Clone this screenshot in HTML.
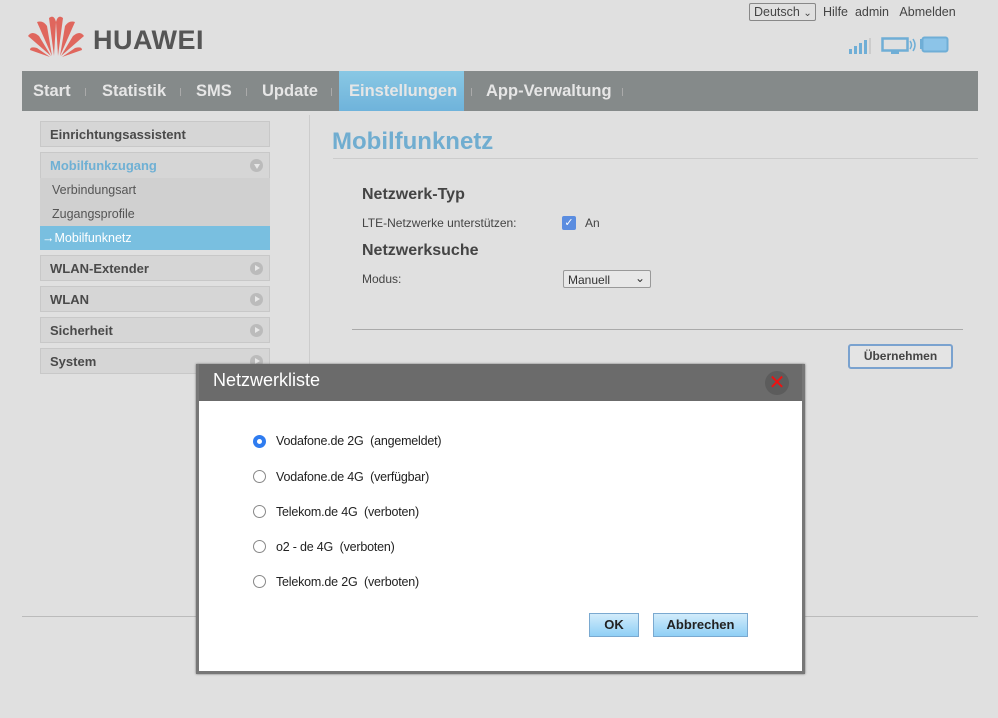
<!DOCTYPE html>
<html><head><meta charset="utf-8"><style>
*{margin:0;padding:0;box-sizing:border-box}
body{width:998px;height:718px;background:#e0e0e0;font-family:"Liberation Sans",Arial,sans-serif;position:relative;overflow:hidden;color:#555}
.a{position:absolute;white-space:nowrap}
.nav{left:22px;top:71px;width:956px;height:40px;background:#858a8a}
.nav span{position:absolute;top:11px;font-size:16.5px;font-weight:bold;color:#e6e6e6}
.nav i{position:absolute;top:17px;width:1px;height:8px;background:#aaa}
.side{left:40px;width:230px;height:26px;background:#d6d6d6;border:1px solid #c8c8c8;font-size:13px;font-weight:bold;color:#4a4a4a;padding:5px 9px}
.arr{position:absolute;right:6px;top:6px;width:13px;height:13px;border-radius:50%;background:#bbb}
.arr:after{content:"";position:absolute;left:5px;top:3px;border-left:5px solid #e8e8e8;border-top:3.5px solid transparent;border-bottom:3.5px solid transparent}
.sub{left:40px;width:230px;height:24px;font-size:12.5px;color:#555;padding:5px 12px;background:#d0d0d0}
.radio{position:absolute;left:253px;width:13px;height:13px;border:1px solid #888;border-radius:50%;background:#fff}
.rl{position:absolute;left:276px;font-size:12.5px;color:#222;letter-spacing:-0.2px}
.btn{position:absolute;height:24px;border:1px solid #7aa9d0;background:linear-gradient(#d2ecfb,#8fcff5);font-size:13px;font-weight:bold;color:#222;text-align:center;line-height:22px}
</style></head><body>
<svg class="a" style="left:27px;top:14px" width="58" height="44" viewBox="0 0 58 44">
<g fill="#e0665d">
<path d="M27 42 L22 4 Q27 0 29 8 Z"/><path d="M31 42 L36 4 Q31 0 29 8 Z"/>
<path d="M25 42 L10 8 Q16 6 20 12 Z"/><path d="M33 42 L48 8 Q42 6 38 12 Z"/>
<path d="M24 42 L1 22 Q5 16 12 22 Z"/><path d="M34 42 L57 22 Q53 16 46 22 Z"/>
<path d="M23 43 L3 36 Q3 32 10 34 Z"/><path d="M35 43 L55 36 Q55 32 48 34 Z"/>
</g></svg>
<div class="a" style="left:93px;top:25px;font-size:27px;font-weight:bold;color:#555;letter-spacing:0.5px">HUAWEI</div>
<div class="a" style="left:749px;top:3px;width:67px;height:18px;border:1px solid #888;border-radius:2px;font-size:12.5px;color:#444;padding-left:4px;line-height:16px">Deutsch <span style="font-size:10px">&#8964;</span></div>
<div class="a" style="left:823px;top:5px;font-size:12.5px;color:#444">Hilfe&nbsp; admin &nbsp;&nbsp;Abmelden</div>
<svg class="a" style="left:848px;top:36px" width="104" height="20">
<g fill="#6faed6"><rect x="1" y="13" width="3" height="5"/><rect x="6" y="10" width="3" height="8"/><rect x="11" y="7" width="3" height="11"/><rect x="16" y="4" width="3" height="14"/></g><rect x="21" y="2" width="2" height="16" fill="#ccc"/>
<rect x="34.5" y="2.5" width="25" height="12" fill="none" stroke="#6faed6" stroke-width="2.5"/><rect x="43" y="15" width="8" height="3" fill="#6faed6"/>
<path d="M62 5 q3 4 0 8 M65 3 q4 6 0 12" stroke="#6faed6" fill="none" stroke-width="1.5"/>
<rect x="72" y="3" width="3" height="10" fill="#6faed6"/><rect x="74.5" y="1.5" width="25" height="14" rx="2" fill="#8cc4e8" stroke="#6faed6" stroke-width="2"/>
</svg>
<div class="a nav">
<span style="left:11px">Start</span><i style="left:63px"></i>
<span style="left:80px">Statistik</span><i style="left:158px"></i>
<span style="left:174px">SMS</span><i style="left:224px"></i>
<span style="left:240px">Update</span><i style="left:309px"></i>
<div style="position:absolute;left:317px;top:0;width:125px;height:40px;background:linear-gradient(#89c8e4,#6fb3db)"></div>
<span style="left:327px">Einstellungen</span><i style="left:449px"></i>
<span style="left:464px">App-Verwaltung</span><i style="left:600px"></i>
</div>
<div class="a side" style="top:121px">Einrichtungsassistent</div>
<div class="a side" style="top:152px;color:#6fb0d4;height:27px">Mobilfunkzugang<div class="arr" style="transform:rotate(90deg)"></div></div>
<div class="a sub" style="top:178px">Verbindungsart</div>
<div class="a sub" style="top:202px">Zugangsprofile</div>
<div class="a sub" style="top:226px;background:#79bfe0;color:#fff;padding-left:2px">→Mobilfunknetz</div>
<div class="a side" style="top:255px">WLAN-Extender<div class="arr"></div></div>
<div class="a side" style="top:286px">WLAN<div class="arr"></div></div>
<div class="a side" style="top:317px">Sicherheit<div class="arr"></div></div>
<div class="a side" style="top:348px">System<div class="arr"></div></div>
<div class="a" style="left:309px;top:115px;width:1px;height:250px;background:#ccc"></div>
<div class="a" style="left:332px;top:128px;font-size:24px;font-weight:bold;color:#70add0">Mobilfunknetz</div>
<div class="a" style="left:333px;top:158px;width:645px;height:1px;background:#ccc"></div>
<div class="a" style="left:362px;top:186px;font-size:16px;font-weight:bold;color:#444">Netzwerk-Typ</div>
<div class="a" style="left:362px;top:216px;font-size:12px;color:#444">LTE-Netzwerke unterstützen:</div>
<div class="a" style="left:562px;top:216px;width:14px;height:14px;background:#5b8de0;border-radius:2px;color:#fff;font-size:11px;text-align:center;line-height:14px">✓</div>
<div class="a" style="left:585px;top:216px;font-size:12px;color:#444">An</div>
<div class="a" style="left:362px;top:242px;font-size:16px;font-weight:bold;color:#444">Netzwerksuche</div>
<div class="a" style="left:362px;top:272px;font-size:12px;color:#444">Modus:</div>
<div class="a" style="left:563px;top:270px;width:88px;height:18px;border:1px solid #999;border-radius:2px;font-size:12px;color:#333;padding:2px 4px;background:#e8e8e8">Manuell<span style="position:absolute;right:5px;top:0">⌄</span></div>
<div class="a" style="left:352px;top:329px;width:611px;height:1px;background:#aaa"></div>
<div class="a" style="left:848px;top:344px;width:105px;height:25px;border:2px solid #7aa2cf;border-radius:3px;background:#e4e4e4;font-size:12px;font-weight:bold;color:#444;text-align:center;line-height:21px">Übernehmen</div>
<div class="a" style="left:22px;top:616px;width:956px;height:1px;background:#bbb"></div>
<div class="a" style="left:196px;top:364px;width:609px;height:310px;background:#fff;border:3px solid #777;border-top:0;box-shadow:0 0 2px #666">
<div style="height:37px;background:#6b6b6b;color:#fff;font-size:18px;padding:6px 14px">Netzwerkliste</div>
<div style="position:absolute;left:566px;top:7px;width:24px;height:24px;border-radius:50%;background:#5c5c5c;color:#e11;font-size:20px;text-align:center;line-height:24px">✕</div>
</div>
<div class="radio" style="top:435px;border:4px solid #2f7cf0;background:#fff"></div>
<div class="rl" style="top:434px">Vodafone.de 2G&nbsp; (angemeldet)</div>
<div class="radio" style="top:470px"></div><div class="rl" style="top:470px">Vodafone.de 4G&nbsp; (verfügbar)</div>
<div class="radio" style="top:505px"></div><div class="rl" style="top:505px">Telekom.de 4G&nbsp; (verboten)</div>
<div class="radio" style="top:540px"></div><div class="rl" style="top:540px">o2 - de 4G&nbsp; (verboten)</div>
<div class="radio" style="top:575px"></div><div class="rl" style="top:575px">Telekom.de 2G&nbsp; (verboten)</div>
<div class="btn" style="left:589px;top:613px;width:50px">OK</div>
<div class="btn" style="left:653px;top:613px;width:95px">Abbrechen</div>
</body></html>
